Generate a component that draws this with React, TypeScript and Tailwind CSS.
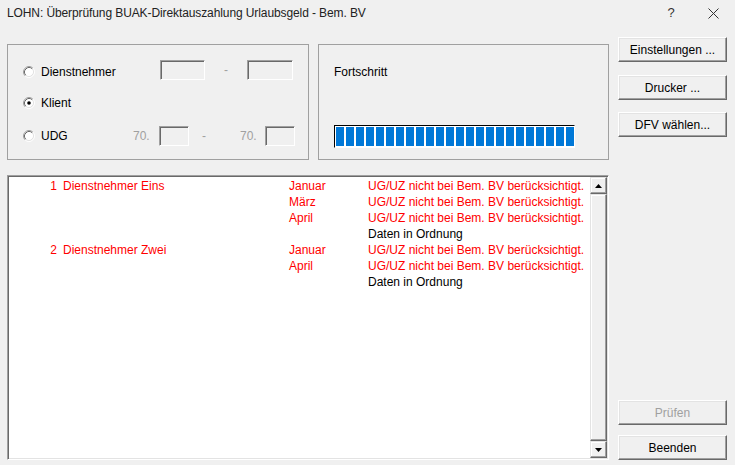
import React from 'react';

const RED = 'text-[#ff0000]';

function Radio({ checked }: { checked?: boolean }) {
  return (
    <svg width="12" height="12" viewBox="0 0 12 12" className="shrink-0">
      <circle cx="6" cy="6" r="4.5" fill="#fff" />
      <path d="M2.11 9.89 A5.5 5.5 0 0 1 9.89 2.11" stroke="#a0a0a0" fill="none" />
      <path d="M9.89 2.11 A5.5 5.5 0 0 1 2.11 9.89" stroke="#fff" fill="none" />
      <path d="M2.82 9.18 A4.5 4.5 0 0 1 9.18 2.82" stroke="#696969" fill="none" />
      <path d="M9.18 2.82 A4.5 4.5 0 0 1 2.82 9.18" stroke="#e3e3e3" fill="none" />
      {checked && <circle cx="6" cy="6" r="1.8" fill="#000" />}
    </svg>
  );
}

function Field({ w }: { w: string }) {
  return (
    <div
      className={`${w} h-[20px] shrink-0 bg-[#f0f0f0] border border-t-[#a0a0a0] border-l-[#a0a0a0] border-r-white border-b-white shadow-[inset_1px_1px_0_#696969]`}
    />
  );
}

function Button({ children, disabled }: { children: React.ReactNode; disabled?: boolean }) {
  return (
    <div
      className={`w-[109px] h-[25px] flex items-center justify-center bg-[#f0f0f0] border border-t-white border-l-white border-r-[#696969] border-b-[#696969] shadow-[inset_-1px_-1px_0_#a0a0a0,inset_1px_1px_0_#e3e3e3] ${
        disabled ? 'text-[#a0a0a0]' : 'text-black'
      }`}
    >
      {children}
    </div>
  );
}

function Raised({ className = '', children }: { className?: string; children?: React.ReactNode }) {
  return (
    <div
      className={`bg-[#f0f0f0] border border-t-[#e3e3e3] border-l-[#e3e3e3] border-r-[#696969] border-b-[#696969] shadow-[inset_-1px_-1px_0_#a0a0a0,inset_1px_1px_0_#fff] flex items-center justify-center ${className}`}
    >
      {children}
    </div>
  );
}

const rows: [string, string, string, string, boolean][] = [
  ['1', 'Dienstnehmer Eins', 'Januar', 'UG/UZ nicht bei Bem. BV berücksichtigt.', true],
  ['', '', 'März', 'UG/UZ nicht bei Bem. BV berücksichtigt.', true],
  ['', '', 'April', 'UG/UZ nicht bei Bem. BV berücksichtigt.', true],
  ['', '', '', 'Daten in Ordnung', false],
  ['2', 'Dienstnehmer Zwei', 'Januar', 'UG/UZ nicht bei Bem. BV berücksichtigt.', true],
  ['', '', 'April', 'UG/UZ nicht bei Bem. BV berücksichtigt.', true],
  ['', '', '', 'Daten in Ordnung', false],
];

export default function App() {
  return (
    <div className="w-[735px] h-[465px] bg-[#f0f0f0] font-['Liberation_Sans',Arial,sans-serif] text-[12px] leading-[14px] text-black overflow-hidden">
      {/* title bar */}
      <div className="h-[28px] flex items-center pl-[7px] pb-[2px]">
        <span className="text-[12px] text-[#222] tracking-[-0.1px]">
          LOHN: Überprüfung BUAK-Direktauszahlung Urlaubsgeld - Bem. BV
        </span>
        <span className="ml-auto w-[12px] text-center text-[13px] text-[#333]">?</span>
        <svg width="11" height="11" viewBox="0 0 11 11" className="ml-[31px] mr-[16px]">
          <path d="M0.5 0.5 L10.5 10.5 M10.5 0.5 L0.5 10.5" stroke="#333" strokeWidth="1" />
        </svg>
      </div>

      <div className="flex pl-[7px]">
        {/* left column */}
        <div className="flex flex-col pt-[16px]">
          <div className="flex gap-[9px]">
            <div className="w-[302px] h-[116px] border border-[#a0a0a0] flex flex-col">
              <div className="flex items-center h-[20px] mt-[15px]">
                <div className="flex items-center w-[152px] pl-[15px] gap-[6px] pt-[3px]">
                  <Radio />
                  <span>Dienstnehmer</span>
                </div>
                <Field w="w-[45px]" />
                <span className="w-[42px] text-center text-[#a0a0a0]">-</span>
                <Field w="w-[46px]" />
              </div>
              <div className="flex items-center h-[20px] mt-[13px]">
                <div className="flex items-center pl-[15px] gap-[6px]">
                  <Radio checked />
                  <span>Klient</span>
                </div>
              </div>
              <div className="flex items-center h-[20px] mt-[13px]">
                <div className="flex items-center w-[125px] pl-[15px] gap-[6px]">
                  <Radio />
                  <span>UDG</span>
                </div>
                <span className="w-[26px] text-[#a0a0a0]">70.</span>
                <Field w="w-[30px]" />
                <span className="w-[51px] pl-[13px] text-[#a0a0a0]">-</span>
                <span className="w-[25px] text-[#a0a0a0]">70.</span>
                <Field w="w-[30px]" />
              </div>
            </div>

            <div className="w-[291px] h-[116px] border border-[#a0a0a0] pl-[15px] pt-[20px]">
              <div>Fortschritt</div>
              <div className="mt-[46px] w-[241px] h-[23px] bg-white border border-t-black border-l-black border-r-white border-b-white flex gap-[2px] pl-[1px] py-[1px] overflow-hidden">
                {Array.from({ length: 24 }).map((_, i) => (
                  <div key={i} className="w-[8px] h-full shrink-0 bg-[#0078d7]" />
                ))}
              </div>
            </div>
          </div>

          {/* list box */}
          <div className="mt-[15px] w-[602px] h-[285px] bg-white border border-t-[#a0a0a0] border-l-[#a0a0a0] border-r-white border-b-white shadow-[inset_1px_1px_0_#696969,inset_-1px_-1px_0_#e3e3e3] p-[1px] flex">
            <div className="flex-1 flex flex-col pt-[1px]">
              {rows.map(([nr, name, month, msg, red], i) => (
                <div key={i} className="grid grid-cols-[48px_232px_79px_1fr] h-[16px] leading-[16px] whitespace-nowrap">
                  <span className={`text-right ${RED}`}>{nr}</span>
                  <span className={`pl-[6px] ${RED}`}>{name}</span>
                  <span className={RED}>{month}</span>
                  <span className={red ? RED : 'text-black'}>{msg}</span>
                </div>
              ))}
            </div>
            <div className="w-[17px] flex flex-col">
              <Raised className="h-[17px] shrink-0">
                <svg width="7" height="4" viewBox="0 0 7 4">
                  <path d="M3.5 0 L7 4 L0 4 Z" fill="#000" />
                </svg>
              </Raised>
              <Raised className="flex-1" />
              <Raised className="h-[17px] shrink-0">
                <svg width="7" height="4" viewBox="0 0 7 4">
                  <path d="M0 0 L7 0 L3.5 4 Z" fill="#000" />
                </svg>
              </Raised>
            </div>
          </div>
        </div>

        {/* right column */}
        <div className="ml-[9px] pt-[9px] pb-[5px] flex flex-col h-[437px]">
          <Button>Einstellungen ...</Button>
          <div className="mt-[13px]">
            <Button>Drucker ...</Button>
          </div>
          <div className="mt-[12px]">
            <Button>DFV wählen...</Button>
          </div>
          <div className="mt-auto">
            <Button disabled>Prüfen</Button>
          </div>
          <div className="mt-[10px]">
            <Button>Beenden</Button>
          </div>
        </div>
      </div>
    </div>
  );
}
